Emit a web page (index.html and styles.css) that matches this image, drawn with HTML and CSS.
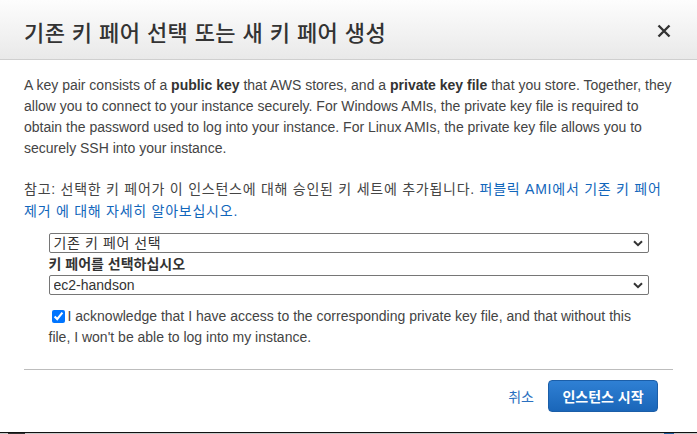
FILE: index.html
```html
<!DOCTYPE html>
<html lang="ko">
<head>
  <meta charset="UTF-8">
  <title>키 페어 선택</title>
  <meta name="viewport" content="width=device-width, initial-scale=1.0">
  <link rel="stylesheet" href="styles.css">
</head>
<body>
  <div class="modal">
    <div class="modal-header">
      <h2>기존 키 페어 선택 또는 새 키 페어 생성</h2>
      <button class="close" aria-label="닫기">
        <svg width="14" height="14" viewBox="0 0 14 14">
          <path d="M1.5 1.5 L12.5 12.5 M12.5 1.5 L1.5 12.5" stroke="#333" stroke-width="2.4" fill="none"/>
        </svg>
      </button>
    </div>

    <div class="modal-body">
      <p class="intro">
        A key pair consists of a <b>public key</b> that AWS stores, and a <b>private key file</b> that you store. Together, they
        allow you to connect to your instance securely. For Windows AMIs, the private key file is required to
        obtain the password used to log into your instance. For Linux AMIs, the private key file allows you to
        securely SSH into your instance.
      </p>

      <p class="note">
        참고: 선택한 키 페어가 이 인스턴스에 대해 승인된 키 세트에 추가됩니다. <a href="#">퍼블릭 AMI에서 기존 키 페어 제거 에 대해 자세히 알아보십시오.</a>
      </p>

      <div class="keypair">
        <div class="select-wrap">
          <select class="ko">
            <option>기존 키 페어 선택</option>
            <option>새 키 페어 생성</option>
          </select>
          <svg class="chevron" width="10" height="7" viewBox="0 0 10 7">
            <path d="M1 1.2 L5 5.2 L9 1.2" stroke="#333" stroke-width="2" fill="none"/>
          </svg>
        </div>

        <label class="field-label">키 페어를 선택하십시오</label>

        <div class="select-wrap">
          <select>
            <option>ec2-handson</option>
          </select>
          <svg class="chevron" width="10" height="7" viewBox="0 0 10 7">
            <path d="M1 1.2 L5 5.2 L9 1.2" stroke="#333" stroke-width="2" fill="none"/>
          </svg>
        </div>

        <label class="ack">
          <input type="checkbox" checked>I acknowledge that I have access to the corresponding private key file, and that without this
          file, I won't be able to log into my instance.
        </label>
      </div>
    </div>

    <div class="modal-footer">
      <div class="actions">
        <a href="#" class="cancel">취소</a>
        <button class="primary">인스턴스 시작</button>
      </div>
    </div>
  </div>

  <div class="strip">
    <span class="bit dark"></span>
    <span class="bit blue"></span>
  </div>
</body>
</html>
```

FILE: styles.css
```css
* {
  margin: 0;
  padding: 0;
  box-sizing: border-box;
}

body {
  font-family: "Liberation Sans", "Noto Sans CJK KR", sans-serif;
  font-size: 14px;
  color: #444;
  background: #fff;
  width: 697px;
  height: 434px;
  overflow: hidden;
}

.modal {
  height: 433px;
  background: #fff;
  border-bottom: 1px solid #111;
  display: flex;
  flex-direction: column;
}

.modal-header {
  height: 60px;
  padding: 3px 26px 0 24px;
  display: flex;
  align-items: center;
  justify-content: space-between;
  background: linear-gradient(#fdfdfd, #e9e9e9);
  border-bottom: 1px solid #cfcfcf;
}

.modal-header h2 {
  font-family: "Noto Sans CJK KR", sans-serif;
  font-size: 22px;
  font-weight: 500;
  letter-spacing: 0.4px;
  color: #333;
  line-height: 28px;
}

.close {
  background: none;
  border: none;
  width: 14px;
  height: 14px;
  display: flex;
  cursor: pointer;
}

.modal-body {
  padding: 15px 24px 0 24px;
}

.intro {
  line-height: 21px;
}

.intro b {
  color: #333;
}

.note {
  margin-top: 19px;
  line-height: 22px;
  letter-spacing: 0.75px;
}

.note a {
  color: #1166bb;
  text-decoration: none;
}

.keypair {
  width: 600px;
  margin: 11px auto 0 auto;
}

.select-wrap {
  position: relative;
  height: 20px;
}

.select-wrap select {
  appearance: none;
  width: 100%;
  height: 20px;
  border: 1px solid #767676;
  border-radius: 2px;
  background: #fff;
  font-family: inherit;
  font-size: 14px;
  color: #333;
  padding: 0 24px 0 4px;
  line-height: 18px;
}

.select-wrap select.ko {
  letter-spacing: 0.6px;
}

.chevron {
  position: absolute;
  right: 6px;
  top: 7px;
  pointer-events: none;
}

.field-label {
  display: block;
  font-weight: bold;
  color: #333;
  line-height: 22px;
}

.ack {
  display: block;
  margin-top: 11px;
  line-height: 21px;
  padding-right: 10px;
}

.ack input {
  width: 13px;
  height: 13px;
  margin: 0 3px 0 3px;
  vertical-align: -2px;
}

.modal-footer {
  margin: 21px 24px 0 24px;
  border-top: 1px solid #bdbdbd;
}

.actions {
  display: flex;
  justify-content: flex-end;
  align-items: center;
  gap: 14px;
  padding-right: 15px;
  margin-top: 10px;
}

.cancel {
  font-family: "Noto Sans CJK KR", sans-serif;
  color: #2a70c0;
  text-decoration: none;
  font-size: 14px;
}

.primary {
  width: 110px;
  height: 32px;
  border: 1px solid #1b5ea8;
  border-radius: 4px;
  background: linear-gradient(#2f80d4, #1a66b9);
  color: #fff;
  font-family: "Noto Sans CJK KR", sans-serif;
  font-size: 14px;
  font-weight: bold;
  cursor: pointer;
}

.strip {
  height: 1px;
  background: #c8c8c8;
  display: flex;
}

.bit {
  display: block;
  height: 1px;
}

.bit.dark {
  width: 17px;
  margin-left: 8px;
  background: #333;
}

.bit.blue {
  width: 10px;
  margin-left: 639px;
  background: #1f5f9f;
}
```
